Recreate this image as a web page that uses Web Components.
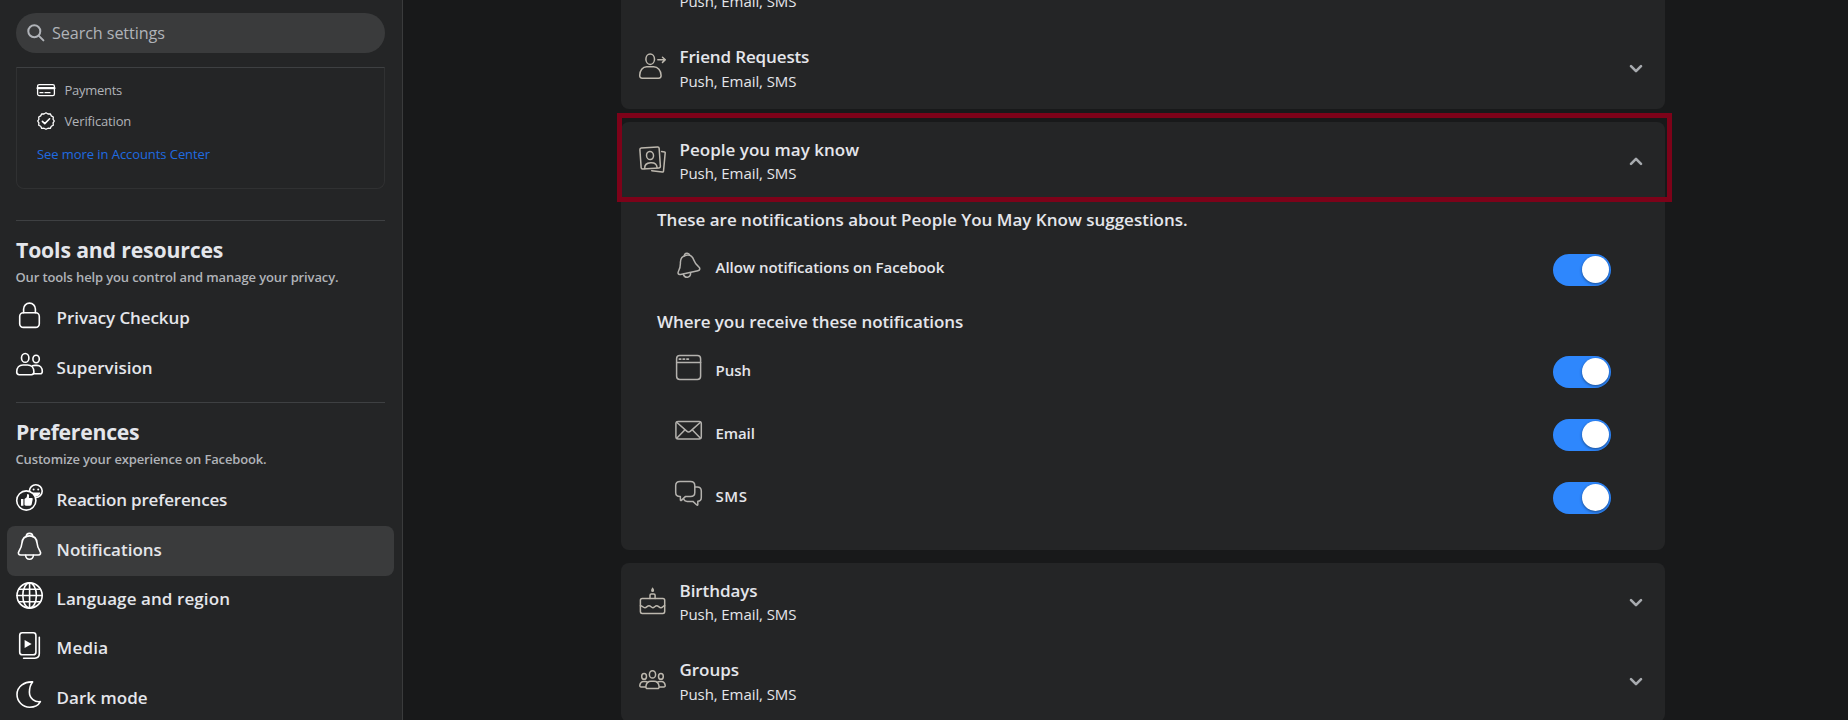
<!DOCTYPE html>
<html lang="en">
<head>
<meta charset="utf-8">
<title>Settings</title>
<style>
  body {
    margin: 0;
    background: #18191a;
    color: #e4e6eb;
    font-family: "Open Sans", "Noto Sans", sans-serif;
  }
</style>
</head>
<body>
<settings-app>
  <side-bar slot="side">
    <accounts-box>
      <account-link icon="card" track="-0.28">Payments</account-link>
      <account-link icon="badge" track="-0.15">Verification</account-link>
    </accounts-box>
    <nav-section heading="Tools and resources" heading-track="-0.14" note="Our tools help you control and manage your privacy." note-track="-0.13">
      <nav-item icon="lock" track="-0.08">Privacy Checkup</nav-item>
      <nav-item icon="people" track="0.02">Supervision</nav-item>
    </nav-section>
    <nav-section heading="Preferences" heading-track="-0.26" note="Customize your experience on Facebook." note-track="-0.15">
      <nav-item icon="reaction" track="-0.18">Reaction preferences</nav-item>
      <nav-item icon="bell" track="0">Notifications</nav-item>
      <nav-item icon="globe" track="0.09">Language and region</nav-item>
      <nav-item icon="media" track="0.2">Media</nav-item>
      <nav-item icon="moon" track="0.03">Dark mode</nav-item>
    </nav-section>
  </side-bar>

  <settings-card class="clipped">
    <notification-row loose></notification-row>
    <notification-row icon="request" heading="Friend Requests" track="-0.14" loose></notification-row>
  </settings-card>
  <settings-card>
    <notification-row icon="cards" heading="People you may know" track="0.02" open marked></notification-row>
    <option-panel>
      <option-group heading="These are notifications about People You May Know suggestions." track="0">
        <option-row class="allow" icon="tiltbell" track="-0.03">Allow notifications on Facebook</option-row>
      </option-group>
      <option-group heading="Where you receive these notifications" track="-0.07">
        <option-row icon="window">Push</option-row>
        <option-row icon="mail" track="-0.1">Email</option-row>
        <option-row icon="chat" track="0.6">SMS</option-row>
      </option-group>
    </option-panel>
  </settings-card>
  <settings-card>
    <notification-row class="short" icon="cake" heading="Birthdays" track="-0.08"></notification-row>
    <notification-row icon="group" heading="Groups" track="-0.05" loose></notification-row>
  </settings-card>
</settings-app>

<script>
'use strict';

// all on a 27x27 grid, except card and badge which use 18x18
const icons = {
  card: '<rect x=".6" y="3.6" width="16.8" height="11" rx="1.6"/><path d="M.6 7.2h16.8" stroke-width="2.2"/><path d="M3 11.7h3M8 11.7h5"/>',
  badge: '<path d="M9 .8l2 1.2 2.3-.2 1 2.1 2 1.1-.2 2.3L17.3 9l-1.2 1.9.2 2.3-2 1.1-1 2.1-2.3-.2-2 1.1-2-1.1-2.3.2-1-2.1-2-1.1.2-2.3L.7 9l1.2-1.7-.2-2.3 2-1.1 1-2.1L7 2z"/><path d="M5.4 9.3l2.4 2.3 4.8-4.8" stroke-width="1.6"/>',
  lock: '<rect x="3.7" y="10.8" width="19.6" height="14.6" rx="3.6"/><path d="M7.6 10.8V7a5.9 5.9 0 0 1 11.8 0v3.8"/>',
  people: '<ellipse cx="9.2" cy="6.9" rx="3.7" ry="4.4"/><path d="M3.2 23.7C1.6 23.7.7 22.7.7 21.1c0-4.4 2.6-7.1 6.3-7.1h4.6c3.7 0 6.3 2.7 6.3 7.1 0 1.6-.9 2.6-2.5 2.6z"/><ellipse cx="20.1" cy="8" rx="3.2" ry="3.7"/><path d="M16.4 14.8c.7-.3 1.5-.4 2.6-.4h1.9c3.2 0 5.4 2.4 5.4 6 0 1.5-.8 2.3-2.2 2.3h-6.5"/>',
  reaction: '<circle cx="19.8" cy="7.1" r="6.4"/><g fill="currentColor" stroke="none"><circle cx="17.6" cy="5.6" r="1"/><circle cx="22.2" cy="5.6" r="1"/><path d="M15.8 8.4h8.4a4.2 4.2 0 0 1-8.4 0z"/></g><circle cx="10.3" cy="16.5" r="9.6" fill="#242526"/><path d="M5 15.1h2.4v6.7H5zm3.5 0 2.2-1.9.6-3.1c1.7-.2 2.2 1.1 1.6 4h2.7c.8 0 1.2.5 1.1 1.2l-1 5c-.2.9-.7 1.4-1.6 1.4H9.7l-1.2-.7z" fill="currentColor" stroke="none"/>',
  bell: '<path d="M10.3 3.6a3.2 3.2 0 0 1 6.4 0"/><path d="M13.5 2.9c-4.8 0-7.3 3.2-7.6 7.4-.2 3.1-1 5-2.8 7.7-1.5 2.2-.6 4 1.8 4h17.2c2.4 0 3.3-1.8 1.8-4-1.8-2.7-2.6-4.6-2.8-7.7-.3-4.2-2.8-7.4-7.6-7.4z"/><path d="M9.6 22.2c.2 2.4 1.8 4 3.9 4s3.7-1.6 3.9-4"/>',
  globe: '<circle cx="13.6" cy="13.5" r="12.6"/><ellipse cx="13.6" cy="13.5" rx="6.8" ry="12.6"/><path d="M13.6.9v25.2M1 13.5h25.2M2.8 7.2h21.6M2.8 19.8h21.6"/>',
  media: '<rect x="3.7" y=".8" width="16.2" height="22" rx="2.6"/><path d="M23.3 5.2v16.4c0 3-1.5 4.6-4.4 4.6H7.6"/><path d="M8.6 8l7 4-7 4z" fill="currentColor" stroke="none"/>',
  moon: '<path d="M16.6.9C9 .3 1 5.4 1 13.6c0 7 5.7 12.6 12.6 12.6 4.5 0 9-2.3 10.8-5.6-5.4 1-11-3.4-11-9.4C13.4 7 14.6 3.3 16.6.9z"/>',
  request: '<ellipse cx="11.2" cy="6.2" rx="4.3" ry="5.2"/><path d="M3.2 25.2C1.6 25.2.7 24.3.7 22.6c0-5 3-8.8 7-8.8h7c4 0 7.4 3.8 7.4 8.8 0 1.7-.9 2.6-2.5 2.6z"/><path d="M18.8 6.8h7.4M23.5 4.2l2.8 2.6-2.8 2.6"/>',
  cards: '<g transform="rotate(-4 11 12)"><rect x="1.5" y="1.5" width="19.3" height="21" rx="1.5"/><ellipse cx="11.2" cy="9.5" rx="3.5" ry="4.1"/><path d="M5 22c0-4 2.3-5.3 6.2-5.3s6.2 1.3 6.2 5.3"/></g><path d="M22.6 5.6l3 .4c.5.1.7.4.6.9l-1.7 18.2c-.1.7-.5 1-1.2.9l-10.6-1.3"/>',
  tiltbell: '<path d="M9.4 3.9a2.7 2.7 0 0 1 5.3-.7"/><path d="M11.4 3.2C7.1 4 5.2 7 5.4 11c.1 3.4-.3 5.1-1.8 8-1.2 2.3-.3 3.9 2 3.4l17.3-3.7c2.3-.5 2.5-2.5.6-4-2.3-1.9-3.6-3.6-4.6-6.4-1.3-3.9-3.9-5.9-7.5-5.1z"/><path d="M8.3 22.4c.8 2 2.4 3.2 4.4 2.8 2-.4 3-2.2 2.9-4.4"/>',
  window: '<rect x="1.6" y="1.5" width="24" height="24" rx="3.2"/><path d="M1.6 8.5h24"/><path d="M4.3 5.1h1.5M8.1 5.1h1.5M11.9 5.1h1.5" stroke-width="1.7"/>',
  mail: '<rect x=".9" y="4.4" width="25.4" height="17.6" rx="2.2"/><path d="M1.7 5.2l10 8.9c1.3 1.2 2.5 1.2 3.8 0l10-8.9M1.7 21.3l8.3-8.5M25.5 21.3l-8.3-8.5"/>',
  chat: '<path d="M5 1.5h10.5c2.7 0 4.3 1.5 4.3 4.2v6.9c0 2.7-1.6 4-4.3 4h-5.2l-3.9 3.8c-.4.4-1 .2-1-.5v-3.3H5c-2.7 0-4.3-1.3-4.3-4V5.7C.7 3 2.3 1.5 5 1.5z"/><path d="M20 7.1h2.2c2.6 0 4.1 1.5 4.1 4v6.3c0 2.4-1.3 3.7-3.5 3.9v3.4c0 .6-.6.7-1 .3l-3.9-3.6h-5.7c-1.7 0-2.8-.7-3.4-2"/>',
  cake: '<rect x="1.4" y="11.4" width="24.3" height="15" rx="1.8"/><path d="M1.4 18.7c2.3 0 2.4 2 4.4 2s2.4-2 4.2-2 2.2 2 3.8 2 2.2-2 3.9-2 2.3 2 4.2 2 2-2 3.8-2M11 11.4V8.2c0-.8.4-1.2 1.2-1.2h2.7c.8 0 1.2.4 1.2 1.2v3.2"/><path d="M13.6.3c1 1.3 1.5 2.3 1.5 3.1a1.5 1.5 0 0 1-3 0c0-.8.5-1.8 1.5-3.1z" fill="currentColor" stroke="none"/>',
  group: '<ellipse cx="13.5" cy="8.4" rx="3.1" ry="3.7"/><ellipse cx="5.1" cy="10.4" rx="2.4" ry="2.9"/><ellipse cx="21.9" cy="10.4" rx="2.4" ry="2.9"/><path d="M8.6 22.5c-1.3 0-1.9-.8-1.7-2.1.4-3.4 2.4-5.2 5.1-5.2h3c2.7 0 4.7 1.8 5.1 5.2.2 1.3-.4 2.1-1.7 2.1z"/><path d="M6.6 20.9H2.2c-1 0-1.5-.6-1.4-1.5.4-2.6 1.8-4 3.8-4h1.6c1 0 1.9.4 2.4.9M20.4 20.9h4.400c1 0 1.5-.6 1.4-1.5-.4-2.6-1.8-4-3.8-4h-1.6c-1 0-1.9.4-2.4.9"/>',
};

function svg(name, size) {
  return `<svg width="${size}" height="${size}" viewBox="0 0 ${size} ${size}">${icons[name] || ''}</svg>`;
}

const svgStyle = `
  svg { display: block; flex: none; overflow: visible; fill: none; stroke: currentColor;
        stroke-width: 1.5; stroke-linecap: round; stroke-linejoin: round; }
`;

class BaseElement extends HTMLElement {
  connectedCallback() {
    if (!this.shadowRoot) {
      this.attachShadow({mode: 'open'});
      this.shadowRoot.innerHTML = this.render();
    }
  }

  attr(name, fallback = '') {
    return this.getAttribute(name) || fallback;
  }
}

customElements.define('settings-app', class extends BaseElement {
  render() {
    return `
      <style>
        :host { display: grid; grid-template-columns: 403px 1fr; height: 720px; overflow: hidden; }
        main { display: flex; flex-direction: column; gap: 13px; width: 1044px; padding-left: 218px; }
        ::slotted(.clipped) { margin-top: -51px; }
      </style>
      <slot name="side"></slot>
      <main><slot></slot></main>`;
  }
});

customElements.define('side-bar', class extends BaseElement {
  connectedCallback() {
    super.connectedCallback();
    this.select('Notifications');
  }

  select(label) {
    this.querySelectorAll('nav-item').forEach((item) => {
      item.toggleAttribute('selected', item.textContent === label);
    });
  }

  render() {
    return `
      <style>
        ${svgStyle}
        :host { display: block; box-sizing: border-box; height: 720px; overflow: hidden;
                background: #242526; border-right: 1px solid #3a3b3c; padding-top: 13px; }
        .search { display: flex; align-items: center; gap: 7px; height: 40px; margin: 0 17px 14px 16px;
                  padding-left: 11px; box-sizing: border-box; border-radius: 20px;
                  background: #3a3b3c; color: #b0b3b8; font-size: 16.2px; letter-spacing: -.1px; }
        .search svg { stroke-width: 2; }
      </style>
      <div class="search">
        <svg width="18" height="18"><circle cx="7.3" cy="7.3" r="6"/><path d="M11.9 11.9l4.5 4.5"/></svg>
        <span>Search settings</span>
      </div>
      <slot></slot>`;
  }
});

customElements.define('accounts-box', class extends BaseElement {
  render() {
    return `
      <style>
        :host { display: block; box-sizing: border-box; height: 122px; margin: 0 17px 31px 16px;
                padding: 6px 20px 0; border: 1px solid #303132; border-top-color: #3e4042;
                border-radius: 0 0 8px 8px; }
        .more { padding-top: 1px; color: #1f6be0; font-size: 13px; letter-spacing: -.07px; line-height: 34px; }
      </style>
      <slot></slot>
      <div class="more">See more in Accounts Center</div>`;
  }
});

customElements.define('account-link', class extends BaseElement {
  render() {
    return `
      <style>
        ${svgStyle}
        :host { display: flex; align-items: center; gap: 9.5px; height: 31px; font-size: 13px;
                color: #b0b3b8; letter-spacing: ${this.attr('track', 0)}px; }
        svg { color: #fff; stroke-width: 1.3; }
      </style>
      ${svg(this.attr('icon'), 18)}<slot></slot>`;
  }
});

customElements.define('nav-section', class extends BaseElement {
  render() {
    return `
      <style>
        :host { display: block; height: 182px; }
        hr { height: 1px; margin: 0 17px 15px 16px; border: 0; background: #3e4042; }
        h2 { margin: 0 16px 2px; font-size: 21.2px; font-weight: 700; line-height: 28px;
             letter-spacing: ${this.attr('heading-track', 0)}px; }
        p { margin: 0 15.5px 7px; font-size: 13px; font-weight: 600; line-height: 22px; color: #b0b3b8;
            letter-spacing: ${this.attr('note-track', 0)}px; }
      </style>
      <hr>
      <h2>${this.attr('heading')}</h2>
      <p>${this.attr('note')}</p>
      <slot></slot>`;
  }
});

customElements.define('nav-item', class extends BaseElement {
  render() {
    return `
      <style>
        ${svgStyle}
        :host { display: flex; align-items: center; gap: 13.6px; box-sizing: border-box; height: 49.4px;
                margin: 0 8px 0 7px; padding-left: 9px; border-radius: 8px;
                font-size: 17px; font-weight: 600; letter-spacing: ${this.attr('track', 0)}px; }
        :host([selected]) { background: #3a3b3c; }
        svg { color: #fff; margin-bottom: 9px; stroke-width: 1.6; }
        span { margin-bottom: 4px; }
      </style>
      ${svg(this.attr('icon'), 27)}<span><slot></slot></span>`;
  }
});

customElements.define('settings-card', class extends BaseElement {
  render() {
    return `
      <style>
        :host { display: block; flex: none; background: #242526; border-radius: 8px; }
      </style>
      <slot></slot>`;
  }
});

customElements.define('notification-row', class extends BaseElement {
  render() {
    const chevron = this.hasAttribute('open') ? 'M2 6.8l5-5 5 5' : 'M2 2.2l5 5 5-5';
    return `
      <style>
        ${svgStyle}
        :host { display: flex; position: relative; box-sizing: border-box; height: 80px; padding: 16px 22px 0 18px; }
        :host(.short) { height: 79px; }
        :host([loose]) .sub { padding-top: 1px; }
        .icon { margin: 8px 13.5px 0 0; color: #bdb8ae; }
        .text { flex: 1; }
        .title { height: 24px; font-size: 17px; font-weight: 600; line-height: 24px;
                 letter-spacing: ${this.attr('track', 0)}px; }
        .sub { font-size: 15px; line-height: 23px; letter-spacing: -.08px; }
        .chevron { margin-top: 19px; color: #a8abaf; stroke-width: 2.6; }
        /* frame drawn over the row and the card edges */
        .mark { position: absolute; inset: -9px -7px 0 -4px; border: 5px solid #7d0219; z-index: 1; }
      </style>
      <div class="icon">${svg(this.attr('icon'), 27)}</div>
      <div class="text">
        <div class="title">${this.attr('heading')}</div>
        <div class="sub">Push, Email, SMS</div>
      </div>
      <svg class="chevron" width="14" height="10"><path d="${chevron}"/></svg>
      ${this.hasAttribute('marked') ? '<div class="mark"></div>' : ''}`;
  }
});

customElements.define('option-panel', class extends BaseElement {
  render() {
    return `
      <style>
        :host { display: flex; flex-direction: column; gap: 9px; padding: 6px 54px 21px 36px; }
      </style>
      <slot></slot>`;
  }
});

customElements.define('option-group', class extends BaseElement {
  render() {
    return `
      <style>
        :host { display: block; }
        h3 { margin: 0 0 6px; font-size: 17px; font-weight: 600; line-height: 24px;
             letter-spacing: ${this.attr('track', 0)}px; }
      </style>
      <h3>${this.attr('heading')}</h3>
      <slot></slot>`;
  }
});

customElements.define('option-row', class extends BaseElement {
  render() {
    return `
      <style>
        ${svgStyle}
        :host { display: flex; align-items: center; gap: 13.5px; height: 63px; padding-left: 18px;
                font-size: 15px; font-weight: 600; letter-spacing: ${this.attr('track', 0)}px; }
        svg { margin-bottom: 9px; color: #b4b2ae; }
        span { flex: 1; margin-bottom: 3px; }
        :host(.allow) span { margin-bottom: 5px; }
      </style>
      ${svg(this.attr('icon'), 27)}
      <span><slot></slot></span>
      <toggle-switch></toggle-switch>`;
  }
});

customElements.define('toggle-switch', class extends BaseElement {
  render() {
    return `
      <style>
        :host { display: flex; justify-content: flex-end; box-sizing: border-box; width: 58px; height: 32px;
                padding: 2px; border-radius: 16px; background: #2e87fd; }
        div { width: 27px; height: 27px; border-radius: 50%; background: #fff; box-shadow: 0 1px 3px rgba(0, 0, 0, .45); }
      </style>
      <div></div>`;
  }
});
</script>
</body>
</html>
